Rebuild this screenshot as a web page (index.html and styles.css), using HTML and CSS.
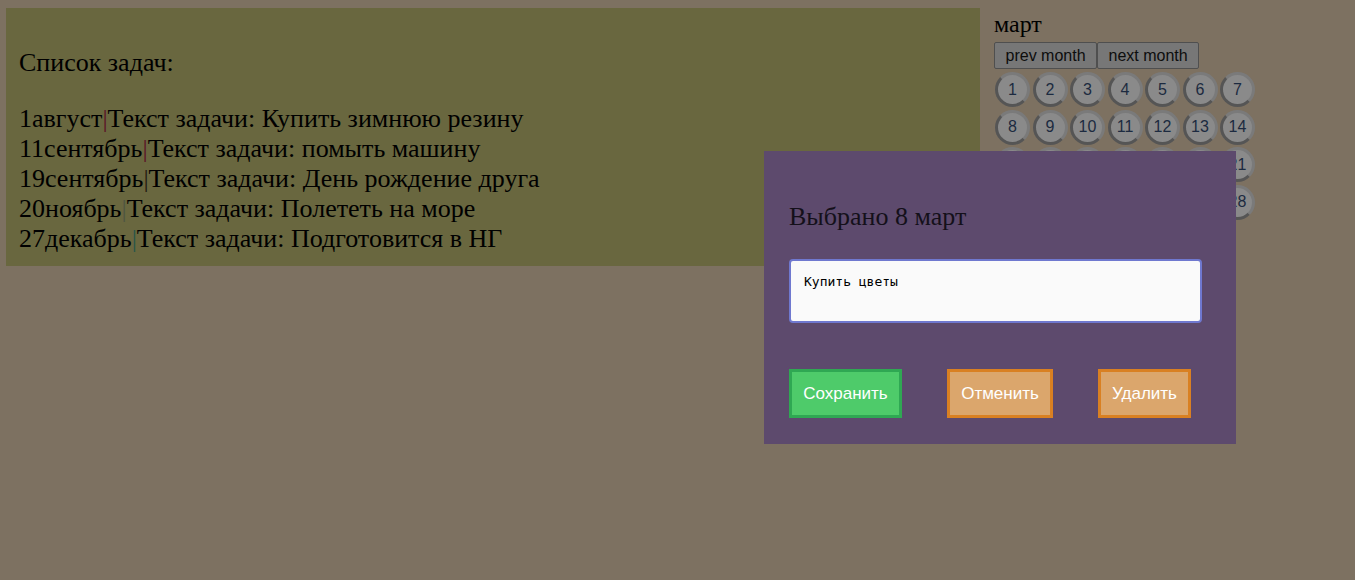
FILE: index.html
```html
<!DOCTYPE html>
<html lang="ru">
<head>
<meta charset="utf-8">
<title>Календарь задач</title>
<link rel="stylesheet" href="styles.css">
</head>
<body>
<div class="page">
  <div class="tasks">
    <div class="tasks-title">Список задач:</div>
    <div class="task-list">
      <div class="task">1август<span class="sep sep-1">|</span>Текст задачи: Купить зимнюю резину</div>
      <div class="task">11сентябрь<span class="sep sep-2">|</span>Текст задачи: помыть машину</div>
      <div class="task">19сентябрь<span class="sep sep-3">|</span>Текст задачи: День рождение друга</div>
      <div class="task">20ноябрь<span class="sep sep-4">|</span>Текст задачи: Полететь на море</div>
      <div class="task">27декабрь<span class="sep sep-5">|</span>Текст задачи: Подготовится в НГ</div>
    </div>
  </div>
  <div class="calendar">
    <div class="month">март</div>
    <div class="month-nav">
      <button class="nav-btn">prev month</button><button class="nav-btn">next month</button>
    </div>
    <div class="days">
      <div class="day">1</div><div class="day">2</div><div class="day">3</div><div class="day">4</div><div class="day">5</div><div class="day">6</div><div class="day">7</div>
      <div class="day">8</div><div class="day">9</div><div class="day">10</div><div class="day">11</div><div class="day">12</div><div class="day">13</div><div class="day">14</div>
      <div class="day">15</div><div class="day">16</div><div class="day">17</div><div class="day">18</div><div class="day">19</div><div class="day">20</div><div class="day">21</div>
      <div class="day">22</div><div class="day">23</div><div class="day">24</div><div class="day">25</div><div class="day">26</div><div class="day">27</div><div class="day">28</div>
      <div class="day">29</div><div class="day">30</div><div class="day">31</div>
    </div>
  </div>
</div>
<div class="modal">
  <div class="modal-title">Выбрано 8 март</div>
  <textarea class="modal-text">Купить цветы</textarea>
  <div class="modal-actions">
    <button class="act act-save">Сохранить</button>
    <button class="act act-cancel">Отменить</button>
    <button class="act act-delete">Удалить</button>
  </div>
</div>
</body>
</html>
```

FILE: styles.css
```css
html, body {
  margin: 0;
  padding: 0;
}
body {
  background: #7d7161;
  font-family: "Liberation Serif", "Times New Roman", serif;
  color: #000;
  height: 580px;
  overflow: hidden;
}
.page {
  display: flex;
  align-items: flex-start;
  padding: 8px 0 0 6px;
  gap: 14px;
}
.tasks {
  width: 974px;
  box-sizing: border-box;
  background: #69673f;
  padding: 40px 13px 12px;
  font-size: 26px;
  line-height: 30px;
}
.tasks-title {
  margin-bottom: 26px;
}
.sep-1 { color: #5c1226; }
.sep-2 { color: #5c1226; }
.sep-3 { color: #231a10; }
.sep-4 { color: #4e5642; }
.sep-5 { color: #27564a; }
.calendar {
  display: flex;
  flex-direction: column;
}
.month {
  font-size: 24px;
  line-height: 28px;
  padding-top: 2px;
  height: 32px;
}
.month-nav {
  display: flex;
}
.nav-btn {
  font-family: "Liberation Sans", Arial, sans-serif;
  font-size: 16px;
  color: #0d0d0d;
  background: #777777;
  border: 1px solid #4f4f4f;
  border-radius: 2px;
  padding: 3px 10.5px;
  height: 27px;
  margin: 0;
}
.days {
  display: grid;
  grid-template-columns: repeat(7, 35px);
  grid-auto-rows: 35px;
  column-gap: 2.5px;
  row-gap: 2.5px;
  margin-top: 3px;
  margin-left: 1px;
}
.day {
  box-sizing: border-box;
  width: 35px;
  height: 35px;
  border-radius: 50%;
  border: 3px solid;
  border-color: #7a7a7a #7a7a7a #555555 #555555;
  background: #8a8a8a;
  display: flex;
  align-items: center;
  justify-content: center;
  font-family: "Liberation Sans", Arial, sans-serif;
  font-size: 16px;
  color: #1c2a40;
}
.modal {
  position: fixed;
  left: 764px;
  top: 151px;
  width: 472px;
  height: 293px;
  box-sizing: border-box;
  background: #5d4a6d;
  padding: 51px 25px 0;
  display: flex;
  flex-direction: column;
}
.modal-title {
  font-size: 26px;
  line-height: 30px;
  color: #14101a;
}
.modal-text {
  margin-top: 27px;
  width: 413px;
  height: 64px;
  box-sizing: border-box;
  background: #fafafa;
  border: 2px solid #6f78cf;
  border-radius: 4px;
  padding: 13px 13px;
  font-family: "DejaVu Sans Mono", monospace;
  font-size: 13px;
  color: #000;
  resize: none;
  outline: none;
}
.modal-actions {
  display: flex;
  gap: 45px;
  margin-top: 46px;
}
.act {
  font-family: "Liberation Sans", Arial, sans-serif;
  font-size: 17px;
  line-height: 19px;
  color: #fff;
  border: 3px solid;
  padding: 12px 10px;
  height: 49px;
  margin: 0;
  border-radius: 0;
}
.act-save {
  background: #4ecb6a;
  border-color: #2fa853;
  width: 113px;
}
.act-cancel {
  background: #dba66c;
  border-color: #d98022;
  width: 106px;
}
.act-delete {
  background: #dba66c;
  border-color: #d98022;
  width: 93px;
}
```
